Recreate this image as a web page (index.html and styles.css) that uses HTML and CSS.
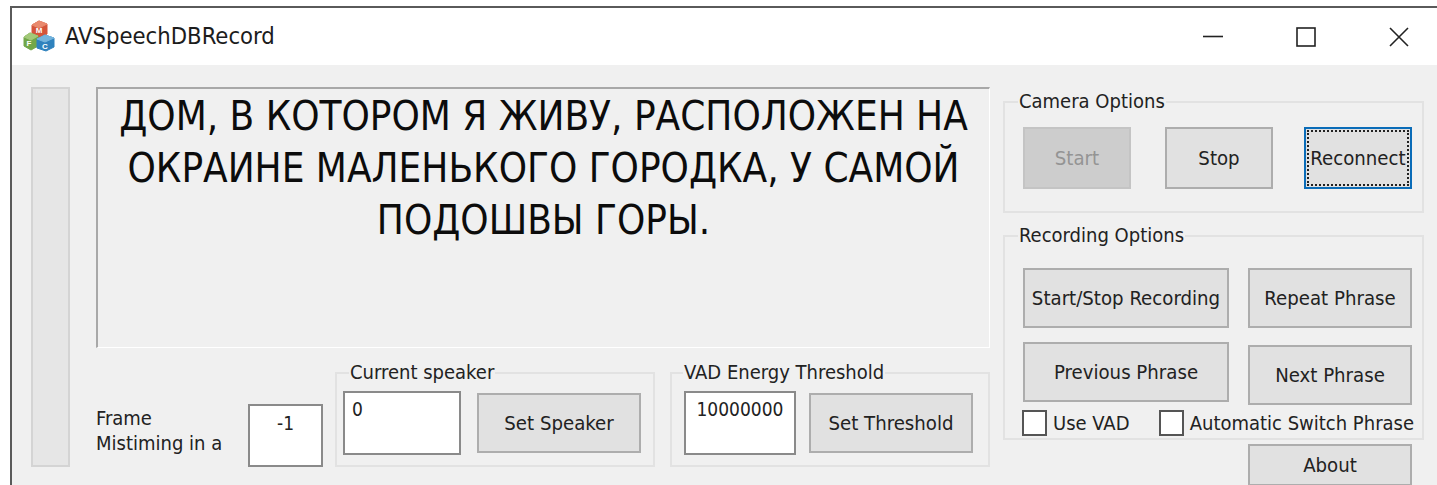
FILE: index.html
```html
<!DOCTYPE html>
<html lang="en">
<head>
<meta charset="utf-8">
<title>AVSpeechDBRecord</title>
<link rel="stylesheet" href="styles.css">
</head>
<body>
<div class="window">
  <header class="titlebar">
    <svg class="app-icon" width="32" height="32" viewBox="0 0 32 32" aria-hidden="true">
      <!-- three stacked cubes of the MFC application icon -->
      <g class="cube">
        <path d="M9 5 L16 1 L24 4 L24 14 L16 18 L9 14 Z" fill="#d4553a" stroke="#d4553a"/>
        <path d="M9 5 L16 8 L24 4 L16 1 Z" fill="#e98a6e" stroke="#e98a6e"/>
        <path d="M1 17 L7 13 L15 16 L15 26 L8 30 L1 26 Z" fill="#72a748" stroke="#72a748"/>
        <path d="M1 17 L8 20 L15 16 L7 13 Z" fill="#a3c97a" stroke="#a3c97a"/>
        <path d="M14 19 L22 15 L31 18 L31 27 L23 31 L14 28 Z" fill="#2f82bd" stroke="#2f82bd"/>
        <path d="M14 19 L22 22 L31 18 L22 15 Z" fill="#74b4dd" stroke="#74b4dd"/>
      </g>
      <text x="16" y="13" class="icon-letter">M</text>
      <text x="6" y="26" class="icon-letter">F</text>
      <text x="22" y="29" class="icon-letter">C</text>
    </svg>
    <span class="app-title">AVSpeechDBRecord</span>
    <div class="window-controls">
      <svg width="20" height="20" viewBox="0 0 20 20" aria-hidden="true"><path d="M0 9.5H20" class="glyph"/></svg>
      <svg width="20" height="20" viewBox="0 0 20 20" aria-hidden="true"><rect x="1" y="1" width="18" height="18" class="glyph"/></svg>
      <svg width="20" height="20" viewBox="0 0 20 20" aria-hidden="true"><path d="M1 1L19 19M19 1L1 19" class="glyph"/></svg>
    </div>
  </header>

  <main class="client">
    <div class="level-meter"></div>

    <section class="center">
      <div class="prompt">ДОМ, В КОТОРОМ Я ЖИВУ, РАСПОЛОЖЕН НА ОКРАИНЕ МАЛЕНЬКОГО ГОРОДКА, У САМОЙ ПОДОШВЫ ГОРЫ.</div>
      <div class="status-row">
        <div class="mistiming">
          <span class="mistiming-label">Frame<br>Mistiming in a</span>
          <div class="field field-mistiming">-1</div>
        </div>
        <div class="group group-speaker">
          <span class="legend">Current speaker</span>
          <div class="field field-speaker">0</div>
          <button class="btn btn-set-speaker">Set Speaker</button>
        </div>
        <div class="group group-vad">
          <span class="legend">VAD Energy Threshold</span>
          <div class="field field-vad">10000000</div>
          <button class="btn btn-set-threshold">Set Threshold</button>
        </div>
      </div>
    </section>

    <aside class="options">
      <div class="group group-camera">
        <span class="legend">Camera Options</span>
        <button class="btn btn-camera" disabled>Start</button>
        <button class="btn btn-camera">Stop</button>
        <button class="btn btn-camera btn-focused"><span class="focus-ring">Reconnect</span></button>
      </div>
      <div class="group group-recording">
        <span class="legend">Recording Options</span>
        <div class="recording-col col-wide">
          <button class="btn">Start/Stop Recording</button>
          <button class="btn">Previous Phrase</button>
        </div>
        <div class="recording-col col-narrow">
          <button class="btn">Repeat Phrase</button>
          <button class="btn">Next Phrase</button>
        </div>
        <div class="check-row">
          <label class="check check-vad"><span class="box"></span>Use VAD</label>
          <label class="check check-auto"><span class="box"></span>Automatic Switch Phrase</label>
        </div>
      </div>
      <button class="btn btn-about">About</button>
    </aside>
  </main>
</div>
</body>
</html>
```

FILE: styles.css
```css
* { box-sizing: border-box; }

html, body {
  margin: 0;
  height: 100%;
  overflow: hidden;
  background: #fff;
}

body {
  font-family: "DejaVu Sans", sans-serif;
  font-stretch: condensed;
  font-size: 20px;
  color: #222;
  padding: 6px 0 0 10px;
}

.window {
  height: 479px;
  border-top: 2px solid #5a5a5a;
  border-left: 2px solid #5a5a5a;
  background: #f0f0f0;
  display: flex;
  flex-direction: column;
}

/* Title bar */
.titlebar {
  height: 57px;
  flex: none;
  background: #fff;
  display: flex;
  align-items: center;
  padding: 0 0 2px 11px;
}

.app-icon { flex: none; }

.cube path {
  stroke-width: 1;
  stroke-linejoin: round;
}

.icon-letter {
  font-family: "Liberation Sans", sans-serif;
  font-size: 8px;
  font-weight: 700;
  fill: #fff;
  text-anchor: middle;
}

.app-title {
  margin-left: 10px;
  font-size: 23.6px;
  color: #1c1c1c;
}

.window-controls {
  margin: 2px 0 0 auto;
  padding-right: 28px;
  display: flex;
  gap: 73px;
}

.glyph {
  fill: none;
  stroke: #222;
  stroke-width: 1.6;
}

/* Client area */
.client {
  flex: 1;
  display: grid;
  grid-template-columns: 39px 920px 434px;
  padding: 22px 0 0 19px;
  min-height: 0;
}

.level-meter {
  width: 39px;
  height: 380px;
  background: #e6e6e6;
  border: 2px solid #d4d4d4;
}

.center {
  margin-left: 26px;
  width: 894px;
  display: flex;
  flex-direction: column;
}

.prompt {
  height: 261px;
  padding: 1px 10px 0;
  border-top: 2px solid #a8a8a8;
  border-left: 2px solid #a8a8a8;
  border-right: 1px solid #fff;
  border-bottom: 1px solid #fff;
  font-size: 40px;
  line-height: 52px;
  text-align: center;
  color: #0c0c0c;
}

.status-row {
  margin-top: 24px;
  display: flex;
  align-items: flex-start;
}

.mistiming {
  width: 239px;
  height: 95px;
  padding-right: 12px;
  display: flex;
  align-items: flex-end;
  justify-content: space-between;
}

.mistiming-label {
  line-height: 25px;
  padding-bottom: 11px;
}

.field {
  background: #fff;
  border: 2px solid #8a8a8a;
  font-size: 19px;
  line-height: 20px;
  color: #222;
}

.field-mistiming {
  width: 75px;
  height: 63px;
  text-align: center;
  padding-top: 7px;
}

/* Group boxes */
.group {
  position: relative;
  border: 2px solid #e2e2e2;
}

.legend {
  position: absolute;
  top: -13px;
  left: 13px;
  padding: 0 1px;
  line-height: 22px;
  background: #f0f0f0;
  white-space: nowrap;
}

.group-speaker,
.group-vad {
  height: 95px;
  display: flex;
  padding: 17px 0 0 6px;
}

.group-speaker { width: 320px; }
.group-speaker .legend { left: 12px; }

.group-vad {
  margin-left: 15px;
  width: 320px;
  padding-left: 12px;
}

.group-vad .legend { left: 11px; }

.field-speaker,
.field-vad {
  height: 64px;
  padding-top: 6px;
}

.field-speaker {
  width: 118px;
  padding-left: 7px;
}

.field-vad {
  width: 112px;
  text-align: center;
}

.btn {
  font-family: inherit;
  font-stretch: inherit;
  font-size: 20.2px;
  color: #222;
  background: #e1e1e1;
  border: 2px solid #adadad;
  border-radius: 0;
  padding: 0;
  height: 60px;
  white-space: nowrap;
}

.btn:disabled {
  background: #cdcdcd;
  border-color: #c4c4c4;
  color: #949494;
}

.btn-set-speaker,
.btn-set-threshold {
  width: 164px;
  margin-top: 2px;
}

.btn-set-speaker { margin-left: 16px; }
.btn-set-threshold { margin-left: 13px; }

/* Right-hand option groups */
.options {
  margin-left: 13px;
  width: 421px;
  display: flex;
  flex-direction: column;
}

.group-camera {
  margin-top: 14px;
  height: 112px;
  display: grid;
  grid-template-columns: 142px 139px 108px;
  padding: 24px 0 0 18px;
}

.btn-camera {
  width: 108px;
  height: 62px;
}

.btn-focused {
  border-color: #0a6cb8;
  padding: 1px;
}

.focus-ring {
  display: flex;
  align-items: center;
  justify-content: center;
  width: 100%;
  height: 100%;
  border: 2px dotted #222;
}

.group-recording {
  margin-top: 22px;
  height: 205px;
  display: grid;
  grid-template-columns: 225px 164px;
  grid-template-rows: 137px auto;
  padding: 31px 0 0 18px;
}

.recording-col {
  display: flex;
  flex-direction: column;
}

.col-wide { gap: 14px; }
.col-wide .btn { width: 206px; }
.col-narrow { gap: 17px; }

.check-row {
  grid-column: 1 / -1;
  display: flex;
  margin-top: 5px;
  margin-left: -1px;
  height: 26px;
  width: 392px;
  overflow: hidden;
}

.check {
  display: flex;
  align-items: center;
  gap: 6px;
  white-space: nowrap;
}

.check-vad { width: 139px; }

.box {
  flex: none;
  width: 25px;
  height: 26px;
  background: #fff;
  border: 2px solid #555;
}

.btn-about {
  margin: 4px 0 0 245px;
  width: 164px;
  height: 42px;
  flex: none;
}
```
